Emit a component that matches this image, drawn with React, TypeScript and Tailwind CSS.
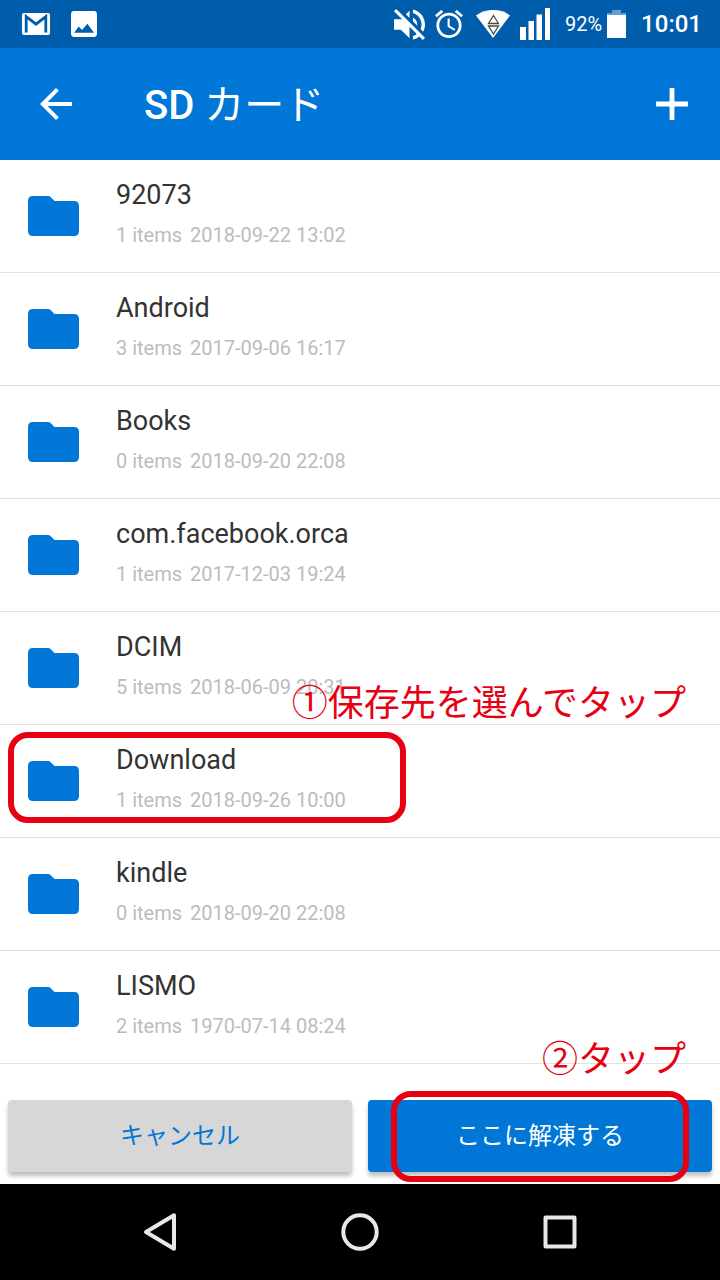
import React from "react";

interface Folder {
  name: string;
  count: number;
  date: string;
  note?: string;
  highlighted?: boolean;
}

const folders: Folder[] = [
  { name: "92073", count: 1, date: "2018-09-22 13:02" },
  { name: "Android", count: 3, date: "2017-09-06 16:17" },
  { name: "Books", count: 0, date: "2018-09-20 22:08" },
  { name: "com.facebook.orca", count: 1, date: "2017-12-03 19:24" },
  { name: "DCIM", count: 5, date: "2018-06-09 20:31", note: "①保存先を選んでタップ" },
  { name: "Download", count: 1, date: "2018-09-26 10:00", highlighted: true },
  { name: "kindle", count: 0, date: "2018-09-20 22:08" },
  { name: "LISMO", count: 2, date: "1970-07-14 08:24" },
];

const StatusBar = () => (
  <div className="flex h-12 items-center justify-between bg-[#005dab] pl-[22px] pr-[18px] text-white">
    {/* Notifications */}
    <div className="flex items-center gap-5">
      <svg width="29" height="24" viewBox="0 0 29 24" aria-hidden="true">
        <rect x="0" y="1" width="28" height="22" rx="2" fill="#fff" />
        <path d="M4.2 20.5V4.6L14 12.2L23.8 4.6V20.5" fill="none" stroke="#005dab" strokeWidth="2.8" />
      </svg>
      <svg width="26" height="26" viewBox="3 3 18 18" fill="#fff" aria-hidden="true">
        <path d="M21 19V5c0-1.1-.9-2-2-2H5c-1.1 0-2 .9-2 2v14c0 1.1.9 2 2 2h14c1.1 0 2-.9 2-2zM5.2 18l3.1-4.2 2.3 2.4 3.8-4.3L18.9 18z" />
      </svg>
    </div>

    {/* System icons and clock */}
    <div className="flex items-center gap-[15px]">
      <div className="flex items-center gap-[10px]">
        <svg width="31" height="31" viewBox="3 3 18 18" fill="#fff" aria-hidden="true">
          <path d="M16.5 12c0-1.77-1.02-3.29-2.5-4.03v2.21l2.45 2.45c.03-.2.05-.41.05-.63zm2.5 0c0 .94-.2 1.82-.54 2.64l1.51 1.51C20.63 14.91 21 13.5 21 12c0-4.28-2.99-7.86-7-8.77v2.06c2.89.86 5 3.54 5 6.71zM4.27 3L3 4.27 7.73 9H3v6h4l5 5v-6.73l4.25 4.25c-.67.52-1.42.93-2.25 1.18v2.06c1.38-.31 2.63-.95 3.69-1.81L19.73 21 21 19.73l-9-9L4.27 3zM12 4L9.91 6.09 12 8.18V4z" />
        </svg>
        <svg width="28" height="28" viewBox="2 2 20 20" fill="#fff" aria-hidden="true">
          <path d="M22 5.72l-4.6-3.86-1.29 1.53 4.6 3.86L22 5.72zM7.88 3.39L6.6 1.86 2 5.71l1.29 1.53 4.59-3.85zM12.5 8H11v6l4.75 2.85.75-1.23-4-2.37V8zM12 4c-4.97 0-9 4.03-9 9s4.02 9 9 9c4.97 0 9-4.03 9-9s-4.03-9-9-9zm0 16c-3.87 0-7-3.13-7-7s3.13-7 7-7 7 3.13 7 7-3.13 7-7 7z" />
        </svg>
        <svg width="37" height="28" viewBox="0 0 37 28" aria-hidden="true">
          <path d="M3 5.5C13 -1.8 28 -1.8 37 5.5L20 28z" fill="#fff" />
          <path d="M20.5 5.5L25.5 13.5H15.5zM15.5 16H25.5L20.5 24z" fill="#fff" stroke="#4a4a42" strokeWidth="1.3" />
        </svg>
        <svg width="30" height="32" viewBox="0 0 30 32" fill="#fff" aria-hidden="true">
          <path d="M0 19h6v13H0zM8.5 13H14v19H8.5zM16.5 6.5H22V32h-5.5zM25 0h5v32h-5z" />
        </svg>
      </div>
      <div className="flex items-center gap-[5px]">
        <span className="text-xl leading-6">92%</span>
        <svg width="19" height="30" viewBox="0 0 19 30" fill="#fff" aria-hidden="true">
          <path d="M5 1h9v3H5zM0 4h19v2H0z" opacity=".4" />
          <path d="M0 6h19v23H0z" />
        </svg>
      </div>
      <span className="text-2xl font-medium leading-6">10:01</span>
    </div>
  </div>
);

const Header = () => (
  <header className="flex h-28 items-center bg-[#0076d7] px-8 text-white">
    <button type="button" aria-label="Back" className="p-2">
      <svg width="32" height="32" viewBox="4 4 16 16" fill="#fff">
        <path d="M20 11H7.83l5.59-5.59L12 4l-8 8 8 8 1.41-1.41L7.83 13H20v-2z" />
      </svg>
    </button>
    <h1 className="ml-16 flex-1 pt-1 text-[40px] font-medium leading-12">
      SD <span className="font-normal">カード</span>
    </h1>
    <button type="button" aria-label="Add" className="-mr-2 p-2">
      <svg width="32" height="32" viewBox="0 0 32 32" fill="#fff">
        <path d="M13.6 0h4.8v13.6H32v4.8H18.4V32h-4.8V18.4H0v-4.8h13.6z" />
      </svg>
    </button>
  </header>
);

const FolderRow = ({ folder }: { folder: Folder }) => (
  <li className="relative border-b border-[#e1e1e1]">
    <button type="button" className="flex w-full items-center pl-7 text-left">
      <svg width="51" height="40" viewBox="0 0 51 40" fill="#0076d7" aria-hidden="true">
        <path d="M5 0H20q1.5 0 2.5 1L26.5 5H46q5 0 5 5V35q0 5-5 5H5q-5 0-5-5V5Q0 0 5 0z" />
      </svg>
      <div className="ml-[37px] pb-[26px] pt-4">
        <div className="text-[27px] leading-[38px] text-[#333333]">{folder.name}</div>
        <div className="mt-[10px] flex gap-2 text-xl leading-[22px] text-[#bcbcbc]">
          <span>{folder.count} items</span>
          <span>{folder.date}</span>
        </div>
      </div>
    </button>
    {folder.note && (
      <p className="absolute -bottom-[2px] right-[34px] text-[36px] leading-11 text-[#e60012]">
        {folder.note}
      </p>
    )}
    {folder.highlighted && (
      <div className="pointer-events-none absolute left-2 top-[7px] h-[91px] w-[398px] rounded-[20px] border-6 border-[#e60012]" />
    )}
  </li>
);

const ActionBar = () => (
  <div className="relative flex gap-4 px-2 pb-3 pt-9">
    <p className="absolute -top-[26px] right-[34px] text-[36px] leading-11 text-[#e60012]">
      ②タップ
    </p>
    <button
      type="button"
      className="h-18 flex-1 rounded bg-[#d7d7d7] text-2xl text-[#0076d7] shadow-[0_4px_4px_rgba(0,0,0,0.25)]"
    >
      キャンセル
    </button>
    <div className="relative flex flex-1">
      <button
        type="button"
        className="h-18 flex-1 rounded bg-[#0076d7] text-2xl text-white shadow-[0_4px_4px_rgba(0,0,0,0.25)]"
      >
        ここに解凍する
      </button>
      <div className="pointer-events-none absolute -bottom-[10px] -top-[9px] left-[23px] right-[23px] rounded-[20px] border-6 border-[#e60012]" />
    </div>
  </div>
);

const NavigationBar = () => (
  <nav className="grid h-24 grid-cols-3 bg-black px-[60px]">
    <button type="button" aria-label="Back" className="flex items-center justify-center">
      <svg width="38" height="40" viewBox="0 0 38 40" fill="none" stroke="#e8e8e8" strokeWidth="4" strokeLinejoin="round">
        <path d="M5 20L33 3.3V36.7z" />
      </svg>
    </button>
    <button type="button" aria-label="Home" className="flex items-center justify-center">
      <svg width="40" height="40" viewBox="0 0 40 40" fill="none" stroke="#e8e8e8" strokeWidth="4">
        <circle cx="20" cy="20" r="16.7" />
      </svg>
    </button>
    <button type="button" aria-label="Recent apps" className="flex items-center justify-center">
      <svg width="40" height="40" viewBox="0 0 40 40" fill="none" stroke="#e8e8e8" strokeWidth="4" strokeLinejoin="round">
        <rect x="5.5" y="5.5" width="29" height="29" />
      </svg>
    </button>
  </nav>
);

const App = () => {
  return (
    <div className="w-full bg-white font-[Roboto,'Noto_Sans_CJK_JP',sans-serif]" lang="ja">
      <StatusBar />
      <Header />
      <main>
        <ul>
          {folders.map((folder) => (
            <FolderRow key={folder.name} folder={folder} />
          ))}
        </ul>
        <ActionBar />
      </main>
      <NavigationBar />
    </div>
  );
};

export default App;
